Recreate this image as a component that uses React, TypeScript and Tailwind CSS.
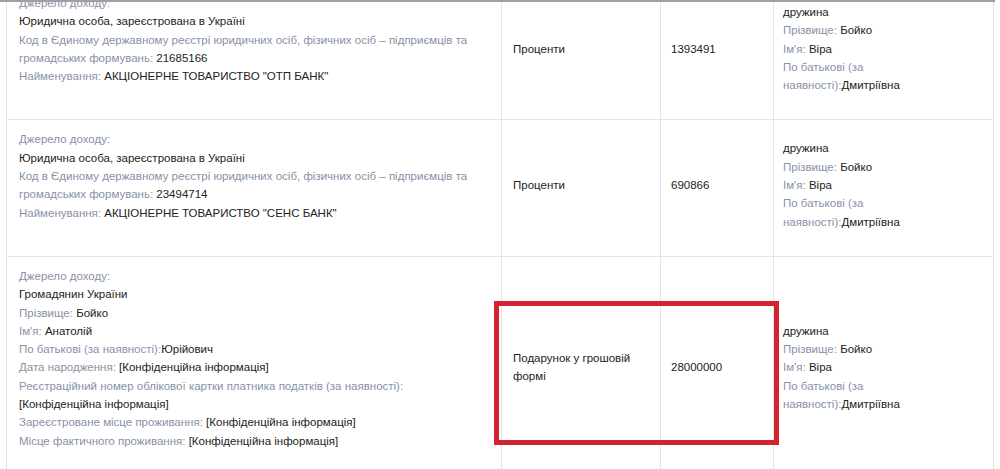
import React from "react";

const L = ({ children }: { children: React.ReactNode }) => (
  <span className="text-[#8792a6]">{children}</span>
);
const V = ({ children }: { children: React.ReactNode }) => (
  <span className="text-[#222]">{children}</span>
);
const C = () => <span className="text-[#222] whitespace-nowrap">[Конфіденційна інформація]</span>;

function Spouse() {
  return (
    <div>
      <div className="text-[#222]">дружина</div>
      <div>
        <L>Прізвище: </L>
        <V>Бойко</V>
      </div>
      <div>
        <L>Ім'я: </L>
        <V>Віра</V>
      </div>
      <div>
        <L>По батькові (за наявності):</L>
        <V>Дмитріївна</V>
      </div>
    </div>
  );
}

function Legal({ code, name }: { code: string; name: string }) {
  return (
    <>
      <div><L>Джерело доходу:</L></div>
      <div><V>Юридична особа, зареєстрована в Україні</V></div>
      <div>
        <L>Код в Єдиному державному реєстрі юридичних осіб, фізичних осіб – підприємців та громадських формувань: </L>
        <V>{code}</V>
      </div>
      <div>
        <L>Найменування: </L>
        <V>{name}</V>
      </div>
    </>
  );
}

const td1 = "w-[495px] border border-[#e4e4e4] align-top pl-[12px] pr-[14px] pt-[10px] pb-[34px]";
const td2 = "w-[159px] border border-[#e4e4e4] align-middle pl-[11px] pr-[12px] pt-[10px] pb-[16px] text-[#222]";
const td3 = "w-[113px] border border-[#e4e4e4] align-middle pl-[10px] pr-[10px] pt-[10px] pb-[16px] text-[#222]";
const td4 = "w-[220px] border border-[#e4e4e4] align-middle pl-[9px] pr-[30px] pt-[10px] pb-[16px]";

export default function App() {
  return (
    <div className="relative w-[1000px] h-[469px] overflow-hidden bg-white font-['Liberation_Sans',Arial,sans-serif] text-[11.5px] leading-[18.3px]">
      <div className="h-[469px] overflow-hidden border-t-2 border-[#a0a0a0] w-[995px]">
        <table className="-mt-[19px] ml-[6px] border-collapse table-fixed w-[987px]">
          <tbody>
            <tr>
              <td className={td1}>
                <Legal code="21685166" name={'АКЦІОНЕРНЕ ТОВАРИСТВО "ОТП БАНК"'} />
              </td>
              <td className={td2}>Проценти</td>
              <td className={td3}>1393491</td>
              <td className={td4}><Spouse /></td>
            </tr>
            <tr>
              <td className={td1}>
                <Legal code="23494714" name={'АКЦІОНЕРНЕ ТОВАРИСТВО "СЕНС БАНК"'} />
              </td>
              <td className={td2}>Проценти</td>
              <td className={td3}>690866</td>
              <td className={td4}><Spouse /></td>
            </tr>
            <tr>
              <td className={td1}>
                <div><L>Джерело доходу:</L></div>
                <div><V>Громадянин України</V></div>
                <div><L>Прізвище: </L><V>Бойко</V></div>
                <div><L>Ім'я: </L><V>Анатолій</V></div>
                <div><L>По батькові (за наявності):</L><V>Юрійович</V></div>
                <div><L>Дата народження: </L><C /></div>
                <div><L>Реєстраційний номер облікової картки платника податків (за наявності): </L><C /></div>
                <div><L>Зареєстроване місце проживання: </L><C /></div>
                <div><L>Місце фактичного проживання: </L><C /></div>
              </td>
              <td className={td2}>Подарунок у грошовій формі</td>
              <td className={td3}>28000000</td>
              <td className={td4}><Spouse /></td>
            </tr>
          </tbody>
        </table>
      </div>
      <div className="absolute left-[494px] top-[301px] w-[285px] h-[144px] border-[5px] border-[#d2232f] pointer-events-none" />
    </div>
  );
}
